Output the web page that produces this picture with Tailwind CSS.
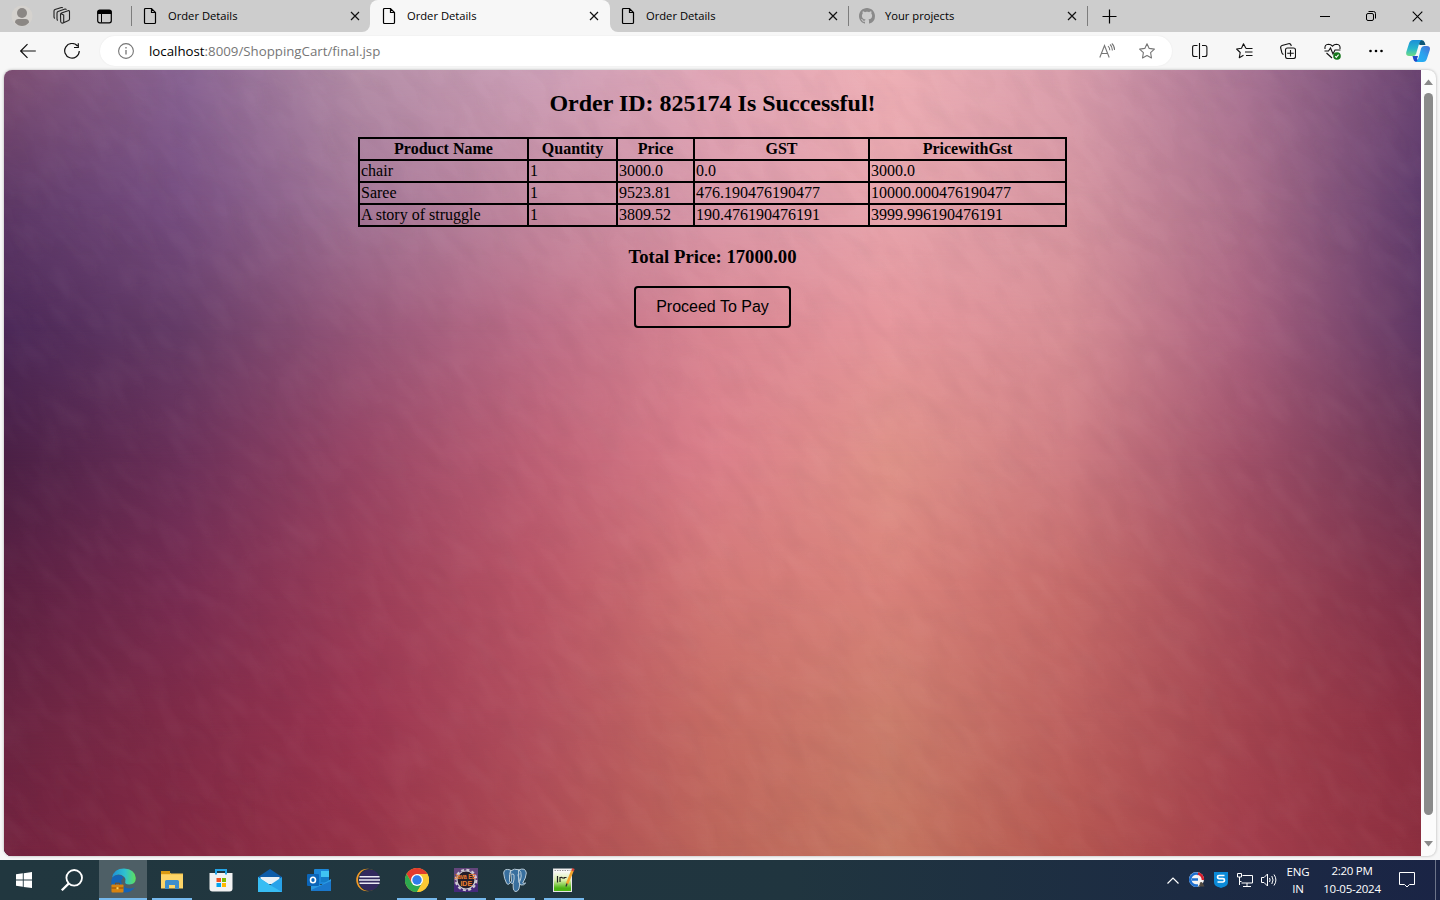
<!DOCTYPE html>
<html lang="en">
<head>
<meta charset="utf-8">
<title>Order Details</title>
<script src="https://cdn.jsdelivr.net/npm/@tailwindcss/browser@4"></script>
</head>
<body class="w-[1440px] h-[900px] overflow-hidden flex flex-col bg-[#f7f7f7] text-black font-['Open_Sans','Noto_Sans',sans-serif]">

<svg class="hidden">
  <defs>
    <symbol id="page" viewBox="0 0 14 18"><path d="M2.5 1.5h6l4 4v10a1 1 0 0 1-1 1h-9a1 1 0 0 1-1-1v-13a1 1 0 0 1 1-1zM8.500 1.500v4h4" fill="none" stroke="#000" stroke-width="1.2"/></symbol>
    <symbol id="x" viewBox="0 0 10 10"><path d="M1 1l8 8M9 1l-8 8" fill="none" stroke="#111" stroke-width="1.2"/></symbol>
  </defs>
</svg>

<!-- Tab strip -->
<header class="h-8 flex shrink-0 text-[11.2px]">
  <div class="w-[370px] h-8 bg-[#cdcdcd] rounded-br-lg flex items-center">
    <svg class="ml-[11px] w-[22px] h-[22px]" viewBox="0 0 22 22"><circle cx="11" cy="11" r="10.500" fill="#d5d2ce"/><circle cx="11" cy="8" r="5" fill="#8b8784"/><path d="M4 17.500q0-3.500 3.500-3.500h7q3.500 0 3.500 3.500-3 3.500-7 3.500t-7-3.500z" fill="#8b8784"/></svg>
    <svg class="ml-5 w-[18px] h-[18px]" viewBox="0 0 18 18" fill="none" stroke="#222" stroke-width="1.100" stroke-linejoin="round"><path d="M7.500 7.500q0-1 1-1.400l6.500-2.400q1.500-.4 1.500 1V12q0 1-1 1.500L10 16q-2 .5-2.300-1.500zM8 6.800l2.700 1.300v7.700M4.800 13.500q-.8-.5-.8-1.500V6q0-1 1-1.500L12 2q1-.2 1.400.8M1.800 11.500q-.8-.6-.8-1.500V4q0-1 1-1.500L8.500.500q.8-.1 1.200.6"/></svg>
    <svg class="ml-[26px] w-[15px] h-[15px]" viewBox="0 0 15 15"><rect x=".7" y="1.200" width="13.600" height="12.600" rx="2" fill="none" stroke="#000" stroke-width="1.200"/><path d="M.5 5V3q0-2 2-2h10q2 0 2 2v2z"/><path d="M4.500 5v8.500" stroke="#000"/></svg>
    <div class="ml-[19px] w-px h-5 bg-[#7d7d7d]"></div>
    <svg class="ml-[11px] w-3.5 h-[18px]"><use href="#page"/></svg>
    <span class="ml-[11px] w-[182px]">Order Details</span>
    <svg class="w-2.5 h-2.5"><use href="#x"/></svg>
  </div>
  <div class="w-60 bg-[#cdcdcd]">
    <div class="h-8 bg-[#f7f7f7] rounded-t-lg flex items-center">
      <svg class="ml-3 w-3.5 h-[18px]"><use href="#page"/></svg>
      <span class="ml-[11px] w-[182px]">Order Details</span>
      <svg class="w-2.5 h-2.5"><use href="#x"/></svg>
    </div>
  </div>
  <div class="flex-1 h-8 bg-[#cdcdcd] rounded-bl-lg flex items-center">
    <svg class="ml-[11px] w-3.5 h-[18px]"><use href="#page"/></svg>
    <span class="ml-[11px] w-[182px]">Order Details</span>
    <svg class="w-2.5 h-2.5"><use href="#x"/></svg>
    <div class="ml-2.5 w-px h-5 bg-[#7d7d7d]"></div>
    <svg class="ml-2.5 w-4 h-4" viewBox="0 0 16 16" fill="#8a8a8a"><path d="M8 0C3.580 0 0 3.580 0 8c0 3.540 2.290 6.530 5.470 7.590.4.070.55-.17.55-.38 0-.19-.01-.82-.01-1.490-2.010.37-2.530-.49-2.690-.94-.09-.23-.48-.94-.82-1.130-.28-.15-.68-.52-.01-.53.63-.01 1.080.58 1.230.82.720 1.210 1.870.87 2.330.66.070-.52.280-.87.510-1.070-1.780-.2-3.640-.89-3.640-3.950 0-.87.310-1.590.82-2.150-.08-.2-.36-1.020.08-2.120 0 0 .67-.21 2.200.82.640-.18 1.320-.27 2-.27s1.360.09 2 .27c1.530-1.040 2.200-.82 2.200-.82.440 1.100.160 1.920.080 2.120.510.560.820 1.270.820 2.150 0 3.070-1.870 3.750-3.650 3.950.290.250.540.730.540 1.480 0 1.070-.01 1.930-.01 2.200 0 .21.150.460.550.380A8.010 8.010 0 0 0 16 8c0-4.420-3.580-8-8-8z"/></svg>
    <span class="ml-2.5 w-[182px]">Your projects</span>
    <svg class="w-2.5 h-2.5"><use href="#x"/></svg>
    <div class="ml-2.5 w-px h-5 bg-[#7d7d7d]"></div>
    <svg class="ml-3.5 w-[15px] h-[15px]" viewBox="0 0 15 15"><path d="M7.500.500v14M.500 7.500h14" stroke="#000" stroke-width="1.200"/></svg>
    <div class="ml-auto flex h-8 items-center">
      <div class="w-[46px] flex justify-center"><div class="w-2.5 h-px bg-black"></div></div>
      <div class="w-[46px] flex justify-center"><svg class="w-3 h-3" viewBox="0 0 12 12" fill="none" stroke="#000"><rect x="1.500" y="3.500" width="7" height="7" rx="1.500"/><path d="M3.500 1.500h5q2 0 2 2v5"/></svg></div>
      <div class="w-[46px] flex justify-center"><svg class="w-[11px] h-[11px]" viewBox="0 0 11 11"><path d="M.7.7l9.600 9.600M10.300.700L.700 10.300" stroke="#000" stroke-width="1.100"/></svg></div>
    </div>
  </div>
</header>

<!-- Address bar -->
<nav class="h-[38px] shrink-0 flex items-center">
  <svg class="ml-5 w-4 h-4" viewBox="0 0 16 16" fill="none" stroke="#111" stroke-width="1.200"><path d="M15.800 8H.800M7.500 1.200L.700 8l6.800 6.800"/></svg>
  <svg class="ml-7 w-4 h-4" viewBox="0 0 16 16" fill="none" stroke="#111" stroke-width="1.200"><path d="M13.500 3A7.300 7.300 0 1 0 15.300 8M14.300.300v4.200H10"/></svg>
  <div class="ml-5 w-[1072px] h-[30px] rounded-full bg-white shadow-[0_0_2px_rgba(0,0,0,0.07)] flex items-center">
    <svg class="ml-[18px] w-4 h-4" viewBox="0 0 16 16" fill="none" stroke="#757575" stroke-width="1.100"><circle cx="8" cy="8" r="7.400"/><path d="M8 7v4.500M8 4v1.400" stroke-width="1.300"/></svg>
    <span class="ml-[15px] mt-px text-[13.280px] whitespace-nowrap text-[#767676]"><span class="text-black">localhost</span>:8009/ShoppingCart/final.jsp</span>
    <svg class="ml-auto w-4 h-4" viewBox="0 0 16 16" fill="none" stroke="#767676" stroke-width="1.100"><path d="M.800 14.500L5.500 2.500l4.700 12M2.400 10.500h6.200M9 3.200q1.800 1.500 1.800 4M11 1.500q2.600 2.200 2.300 6M12.800.500q3 2.500 2.700 6.500"/></svg>
    <svg class="ml-6 mr-[17px] w-4 h-4" viewBox="0 0 16 16" fill="none" stroke="#767676" stroke-width="1.100" stroke-linejoin="round"><path d="M8 .700l2.200 4.700 5.200.7-3.800 3.600.9 5.300L8 12.500 3.500 15l.9-5.300L.600 6.100l5.200-.7z"/></svg>
  </div>
  <svg class="ml-5 w-4 h-4" viewBox="0 0 16 16" fill="none" stroke="#111" stroke-width="1.100"><path d="M7.500 0v16M5.500 2.500H2.500Q.6 2.500.6 4.500v7q0 2 1.900 2h3M10 2.500h3q1.900 0 1.900 2v7q0 2-1.900 2h-3"/></svg>
  <svg class="ml-7 w-[17px] h-4" viewBox="0 0 17 16" fill="none" stroke="#111" stroke-width="1.100" stroke-linejoin="round"><path d="M10 5.500L7.500.700 5.500 5.300.600 6l3.600 3.500-.9 5.200 4.200-2.500M10 5.500h6.500M9 9h7.500M10 12.500h6.500"/></svg>
  <svg class="ml-[27px] w-4 h-4" viewBox="0 0 16 16" fill="none" stroke="#111" stroke-width="1.100"><rect x="5.500" y="5" width="10" height="10.500" rx="2"/><path d="M10.500 7v6.500M7.200 10.200h6.600M3.500 11.500Q2.300 11 1.900 9.800L.700 5Q.300 3.200 2 2.500L8.500.700Q10.500.300 11 2l.3 1"/></svg>
  <svg class="ml-7 w-[17px] h-[17px]" viewBox="0 0 17 17" fill="none" stroke="#111" stroke-width="1.100"><path d="M1 6Q.300 1.300 4.500 1.200q2.500 0 4 2 1.500-2 4-2Q16.700 1.300 16 6M.500 8h4l2-3 2.500 6 2-4h5.500M2.500 10l5.500 5"/><circle cx="13" cy="13" r="3.800" fill="#15771b" stroke="none"/><path d="M11.300 13.200l1 1.200 2.300-2.800" stroke="#fff"/></svg>
  <svg class="ml-[27px] w-4 h-4" viewBox="0 0 16 16"><circle cx="2.500" cy="8" r="1.300"/><circle cx="8" cy="8" r="1.300"/><circle cx="13.500" cy="8" r="1.300"/></svg>
  <svg class="ml-[22px] w-6 h-6" viewBox="0 0 24 24">
    <defs><linearGradient id="cpa" x1="0" y1="0" x2="0" y2="1"><stop offset="0" stop-color="#1c8fd8"/><stop offset=".55" stop-color="#28b7cb"/><stop offset="1" stop-color="#6fdb83"/></linearGradient><linearGradient id="cpb" x1="1" y1="0" x2="0" y2="1"><stop offset="0" stop-color="#4a6bd2"/><stop offset=".5" stop-color="#2aa3ee"/><stop offset="1" stop-color="#25b4f5"/></linearGradient></defs>
    <path d="M12 1h3.500q2.500 0 3.200 2.500L19.500 6h-6z" fill="#0e5678"/>
    <path d="M6.500 17l5.500 0-1 3 3 3H10Q8 23 7.300 20z" fill="#2149c8"/>
    <path d="M7 1h9q-2 .5-3 4l-2.800 9.500Q9.500 17 7 17H3Q-.5 17 .3 13L3 4.500Q4 1 7 1z" fill="url(#cpa)"/>
    <path d="M17 23H9.500q2-.5 3-4l2.500-9.500Q15.700 7 18 7h3q3.700 0 2.800 4L21 19.500Q20 23 17 23z" fill="url(#cpb)"/>
  </svg>
</nav>

<!-- Page viewport -->
<div class="h-[790px] shrink-0 pl-1 pr-1 pb-1">
<div class="h-[786px] flex rounded-lg overflow-hidden shadow-[0_0_3px_rgba(0,0,0,0.3)] bg-[#fcfcfc]">
  <main class="relative isolate w-[1417px] h-full flex flex-col items-center font-['Liberation_Serif',serif]">
    <svg id="backdrop" class="absolute inset-0 -z-10 w-[1417px] h-[786px]" viewBox="0 0 1417 786">
      <defs>
        <filter id="grain" x="0" y="0" width="100%" height="100%" color-interpolation-filters="sRGB"><feTurbulence type="fractalNoise" baseFrequency=".025 .06" numOctaves="2" seed="4"/><feColorMatrix values="0 0 0 0 1  0 0 0 0 .9  0 0 0 0 .9  1.500 0 0 0 -.6"/></filter>
        <filter id="shade" x="0" y="0" width="100%" height="100%" color-interpolation-filters="sRGB"><feTurbulence type="fractalNoise" baseFrequency=".025 .06" numOctaves="2" seed="9"/><feColorMatrix values="0 0 0 0 .3  0 0 0 0 .15  0 0 0 0 .2  1.500 0 0 0 -.6"/></filter>
      </defs>
      <g id="mesh"></g>
      <g transform="rotate(50 708 393)">
        <rect x="-200" y="-450" width="1820" height="1700" filter="url(#grain)" opacity=".05"/>
        <rect x="-200" y="-450" width="1820" height="1700" filter="url(#shade)" opacity=".06"/>
      </g>
    </svg>
    <h2 class="mt-5 h-[27px] leading-[27px] text-[24px] font-bold">Order ID: 825174 Is Successful!</h2>
    <table class="mt-5 w-[709px] table-fixed border-collapse border-2 border-black text-[16px] leading-[18px] [&_th]:border-2 [&_td]:border-2 [&_th]:border-black [&_td]:border-black [&_th]:p-px [&_td]:p-px [&_th]:font-bold [&_tr]:h-[22px]">
      <colgroup><col class="w-[169px]"><col class="w-[89px]"><col class="w-[77px]"><col class="w-[175px]"><col class="w-[197px]"></colgroup>
      <tbody>
      <tr><th>Product Name</th><th>Quantity</th><th>Price</th><th>GST</th><th>PricewithGst</th></tr>
      <tr><td>chair</td><td>1</td><td>3000.0</td><td>0.0</td><td>3000.0</td></tr>
      <tr><td>Saree</td><td>1</td><td>9523.81</td><td>476.190476190477</td><td>10000.000476190477</td></tr>
      <tr><td>A story of struggle</td><td>1</td><td>3809.52</td><td>190.476190476191</td><td>3999.996190476191</td></tr>
      </tbody>
    </table>
    <h3 class="mt-[19px] h-[21px] leading-[21px] text-[18.720px] font-bold">Total Price: 17000.00</h3>
    <button class="mt-[19px] w-[157px] h-[42px] border-2 border-black rounded-[4px] text-[16px] font-['Liberation_Sans',sans-serif]">Proceed To Pay</button>
  </main>
  <div class="w-[15px] h-full flex flex-col items-center">
    <svg class="mt-[9px] w-[9px] h-[6px]" viewBox="0 0 9 6"><path d="M0 6l4.500-5.500L9 6z" fill="#8a8a8a"/></svg>
    <div class="mt-2 w-[9px] h-[722px] rounded-full bg-[#8b8b8b]"></div>
    <svg class="mt-[26px] w-[9px] h-[6px]" viewBox="0 0 9 6"><path d="M0 0l4.500 5.500L9 0z" fill="#8a8a8a"/></svg>
  </div>
</div>
</div>

<!-- Taskbar -->
<footer class="h-10 shrink-0 flex text-white bg-linear-to-r from-[#21373f] via-[#20353f] via-55% to-[#1a2445]">
  <div class="w-12 h-10 flex items-center justify-center"><svg class="w-4 h-4" viewBox="0 0 16 16" fill="#fff"><path d="M0 2.300l6.800-1v6.300H0zM7.700 1.200L16 0v7.600H7.700zM0 8.500h6.800v6.300l-6.800-1zM7.700 8.500H16V16l-8.300-1.100z"/></svg></div>
  <div class="w-12 mr-[3px] h-10 flex items-center justify-center"><svg class="w-[22px] h-[22px]" viewBox="0 0 22 22" fill="none" stroke="#fff" stroke-width="1.800"><circle cx="13.200" cy="8.800" r="7.800"/><path d="M7.600 14.600L.800 21.300" stroke-width="2.200"/></svg></div>
  <div class="w-12 h-10 bg-[#4e5f66] border-b-2 border-[#76b9ed] flex items-center justify-center">
    <svg class="mt-0.5 w-[25px] h-[25px]" viewBox="0 0 25 25"><defs><linearGradient id="ed"><stop offset="0" stop-color="#1d90d8"/><stop offset=".55" stop-color="#2fc2cf"/><stop offset="1" stop-color="#5fe05a"/></linearGradient></defs><path d="M.5 17Q-.5 9 4 7.500q6-1.500 8.500 2-3.500 3-1.500 7 3 4.500 9 4 2.500-.2 4-1.500-3.500 5.500-10.500 5.500-9 0-13-7.500z" fill="#1464b8"/><path d="M1 9.500Q3 .600 13 .500q11 .500 11.800 9.500 0 6.500-6.500 6.500-5 0-4-3 1-2.500-1-4.500-6-5-12.300.5z" fill="url(#ed)"/><rect x=".5" y="16.500" width="12" height="8" rx=".8" fill="#d8830f"/><path d="M4.500 16.500v-1.300h4v1.300M.5 20h12" fill="none" stroke="#8a4b08"/><rect x="5.500" y="19.200" width="2" height="2" fill="#ffd75e"/></svg>
  </div>
  <div class="w-[49px] flex flex-col items-center"><div class="h-[38px] flex items-center"><svg class="mt-0.5 w-[22px] h-[20px]" viewBox="0 0 22 20"><path d="M0 2h8l2 1.500h12V18H0z" fill="#f9c953"/><path d="M0 1h9v3H0z" fill="#d99a12"/><path d="M0 5h22v13.500H0z" fill="#fdd568"/><path d="M4 19v-7.500q0-1.500 1.500-1.500h11q1.500 0 1.500 1.500V19h-4v-4H8v4z" fill="#3d8ecc"/></svg></div><div class="w-10 h-0.5 bg-[#76b9ed]"></div></div>
  <div class="w-[49px] h-10 flex items-center justify-center"><svg class="w-6 h-6" viewBox="0 0 24 24"><path d="M7 6V2h10v4" fill="none" stroke="#24a5e8" stroke-width="2"/><path d="M.5 5h23v15.500q0 3-3 3h-17q-3 0-3-3z" fill="#f2f2f2"/><path d="M7 5v1.500M17 5v1.500" stroke="#24a5e8" stroke-width="2"/><path d="M7.500 10H12v4H7.500z" fill="#f25022"/><path d="M13 10h4v4h-4z" fill="#7fba00"/><path d="M7.500 15H12v4H7.500z" fill="#00a4ef"/><path d="M13 15h4v4h-4z" fill="#ffb900"/></svg></div>
  <div class="w-[49px] h-10 flex items-center justify-center"><svg class="w-6 h-[23px]" viewBox="0 0 24 23"><path d="M0 8L12 0l12 8v5H0z" fill="#0c5ca9"/><path d="M2.500 8h19v7h-19z" fill="#e9f0f6"/><path d="M0 8l12 8 12-8v15H0z" fill="#28a2e9"/><path d="M0 8v15h24L12 16z" fill="#38bdf3"/></svg></div>
  <div class="w-[49px] h-10 flex items-center justify-center"><svg class="w-6 h-[22px]" viewBox="0 0 24 22"><path d="M7 1q0-1 1-1h13q1 0 1 1v14H7z" fill="#1c87d8"/><path d="M14 2h8v6h-8z" fill="#3fc4f2"/><path d="M14 8h8v5h-8z" fill="#137cc8"/><path d="M4 11l10 5 10-6v11q0 1-1 1H5q-1 0-1-1z" fill="#2a9ae3"/><path d="M4 21l20-9v9q0 1-1 1H5z" fill="#1a78cc"/><rect y="5" width="12" height="12" rx="1" fill="#0b65b8"/><ellipse cx="6" cy="11" rx="2.500" ry="2.800" fill="none" stroke="#fff" stroke-width="1.600"/></svg></div>
  <div class="w-[49px] h-10 flex items-center justify-center"><svg class="w-6 h-6" viewBox="0 0 24 24"><circle cx="11.500" cy="12" r="11.300" fill="#f39a26"/><circle cx="13" cy="12" r="11" fill="#20343e"/><circle cx="13.500" cy="12" r="10.500" fill="#33295e"/><path d="M3.500 8.700h20M3 12h21M3.500 15.200h20" stroke="#eceaf4" stroke-width="1.600"/></svg></div>
  <div class="w-[49px] flex flex-col items-center"><div class="h-[38px] flex items-center"><svg class="mt-0.5 w-6 h-6" viewBox="0 0 24 24"><circle cx="12" cy="12" r="12" fill="#fcc934"/><path d="M1.600 6A12 12 0 0 1 22.400 6H12L6.800 15z" fill="#e33b2e"/><path d="M1.600 6A12 12 0 0 0 12 24l5.200-9H6.800z" fill="#2da94f"/><path d="M12 6h10.400A12 12 0 0 1 12 24l5.200-9z" fill="#fcc934"/><circle cx="12" cy="12" r="6" fill="#fff"/><circle cx="12" cy="12" r="4.700" fill="#2f7de9"/></svg></div><div class="w-10 h-0.5 bg-[#76b9ed]"></div></div>
  <div class="w-[49px] flex flex-col items-center"><div class="h-[38px] flex items-center"><svg class="mt-0.5 w-6 h-6 overflow-visible" viewBox="0 0 24 24"><rect width="24" height="24" fill="#65467d"/><path d="M0 16h24v8H0z" fill="#45297a"/><circle cx="12" cy="12" r="9" fill="#241c2a" stroke="#cfcbd3" stroke-width="1.200"/><circle cx="12" cy="12" r="10.300" fill="none" stroke="#cfcbd3" stroke-width="2" stroke-dasharray="3 2.400"/><g font-family="Liberation Sans" font-weight="bold" fill="#f08030"><text transform="translate(.3 11) scale(.82 1)" font-size="7" letter-spacing="-.1">Java EE</text><text x="6.400" y="17.500" font-size="7">IDE</text></g></svg></div><div class="w-10 h-0.5 bg-[#76b9ed]"></div></div>
  <div class="w-[49px] flex flex-col items-center"><div class="h-[38px] flex items-center"><svg class="mt-0.5 w-6 h-6" viewBox="0 0 24 24" fill="#386f9e" stroke="#b9ccd8" stroke-width="1" stroke-linejoin="round"><path d="M7.500 2Q1 0 .7 5q.3 5.500 3 10.500 1.500 2 3.300-.5l1.500-2zM15.500 2Q22.500-1 23.300 5q-.3 5-3.600 10 1.500.8 3 0-1.500 2.500-5 2l-2-3zM7.500 3Q11 0 16 1.800q2.500 2 2.200 6.200-.2 3-1.700 6 .5 9-3.500 9.500-2.700 0-2.800-4.500v-3.500Q6 15.500 6.500 11q-.5-5 1-8z"/><path d="M8.500 6.500q2-1.500 2.500.5.500 4-.8 8M16.500 6q-1.500-.5-1.500 1l1.500 6" fill="none"/></svg></div><div class="w-10 h-0.5 bg-[#76b9ed]"></div></div>
  <div class="w-[49px] flex flex-col items-center"><div class="h-[38px] flex items-center"><svg class="mt-0.5 w-6 h-6" viewBox="0 0 24 24"><defs><linearGradient id="np" x1="0" y1="0" x2="0" y2="1"><stop offset=".1" stop-color="#fafafa"/><stop offset=".5" stop-color="#d8efa8"/><stop offset=".85" stop-color="#4db414"/></linearGradient></defs><rect x="1.500" y="1" width="18" height="22.500" fill="url(#np)" stroke="#e6e6e6"/><path d="M2.500 2.500h16" stroke="#999" stroke-width="1.200" stroke-dasharray="1.500 1"/><path d="M5.500 8v6.500M8 9v5M8.500 9.500q2-.5 2 1M12 9.500h2.500M12 9v2" fill="none" stroke="#222" stroke-width="1.200"/><path d="M20.500 2.500L15 16" stroke="#f3a42c" stroke-width="2.600"/><path d="M21.500 .500l-1 2.500" stroke="#d4473a" stroke-width="2.600"/><path d="M15 15.500l-1 3" stroke="#333" stroke-width="1.300"/></svg></div><div class="w-10 h-0.5 bg-[#76b9ed]"></div></div>
  <div class="ml-auto flex items-center h-10">
    <svg class="w-3 h-[7px]" viewBox="0 0 12 7"><path d="M.500 6.500L6 1l5.500 5.500" fill="none" stroke="#fff" stroke-width="1.200"/></svg>
    <svg class="ml-2.5 w-4 h-4" viewBox="0 0 16 16"><circle cx="7.500" cy="7.500" r="7.500" fill="#f4f4f4"/><path d="M9.500 2A6 6 0 1 0 9 13.300M3 7.500h6" fill="none" stroke="#1d6fd0" stroke-width="2.600"/><path d="M9 1.500Q13.500 2.500 14 8" fill="none" stroke="#d51d2c" stroke-width="2.500"/><path d="M9 14.500q2-1 2-4 2-1.500 3 1l1.500 3z" fill="#514a42"/></svg>
    <svg class="ml-[9px] w-3.5 h-4" viewBox="0 0 14 16"><path d="M0 0h14v10q0 3-3 4.500L7 16l-4-1.500Q0 13 0 10z" fill="#0b8ad8"/><path d="M10.500 3.500H5Q3.500 3.500 3.500 5T5 6.700h4q1.500 0 1.500 1.600T9 10H3.500" fill="none" stroke="#fff" stroke-width="1.700"/></svg>
    <svg class="ml-[9px] w-4 h-[14px]" viewBox="0 0 16 14" fill="none" stroke="#fff"><path d="M5.500 2.500h10v7.500H4.500M10 10v3M6 13.500h8M.5.500h4v3.500H.500zM2.500 4v8M2.500 8.500h2"/></svg>
    <svg class="ml-2 w-[17px] h-[14px]" viewBox="0 0 17 14" fill="none" stroke="#fff"><path d="M.5 4.500h2.500L6.500 1v12L3 9.500H.500zM8.500 5q1.200 2 0 4M10.800 3q2.500 4 0 8M13 1.500q3.800 5.500 0 11"/></svg>
    <div class="ml-2 w-6 text-center text-[11.500px] leading-[17px] tracking-[-0.2px]">ENG<br>IN</div>
    <div class="ml-3 w-[60px] text-center text-[11.500px] leading-[18px] tracking-[-0.250px] whitespace-nowrap">2:20 PM<br>10-05-2024</div>
    <svg class="ml-[17px] w-4 h-4" viewBox="0 0 16 16" fill="none" stroke="#fff"><path d="M.5.500h15v12H10.500L8 15l-2.500-2.500h-5z"/></svg>
    <div class="ml-5 mr-1 w-px h-10 bg-[#6c7489]"></div>
  </div>
</footer>

<script>
  // Colour mesh of the wallpaper: each row fades into the next one.
  const ys = [0, 130, 260, 390, 520, 650, 786];
  const rows = [
    ['#7d4f74','#8a6594','#b58fa8','#cda0b8','#e2a8b8','#eeb0b6','#dba0ae','#ab7696','#6b4573'],
    ['#5f3a68','#785083','#a47899','#c48ca2','#da9aab','#e8a6ae','#d898a3','#ac708c','#5f3c6d'],
    ['#4b2858','#653c67','#965679','#bc6d87','#da8793','#e5969c','#d88f96','#ab6380','#5f3764'],
    ['#4b2046','#6b3059','#984565','#bd6075','#db7f8a','#df9289','#cf7d83','#a05068','#6b3354'],
    ['#5c2042','#782c52','#9a3d58','#b95566','#d27876','#d9827b','#c66c6a','#a44a5a','#7c2e48'],
    ['#6a2442','#802b48','#9b3551','#b2505e','#c66c64','#cb7d6c','#be6260','#a3444f','#8a2e42'],
    ['#742440','#842943','#963347','#ad4a52','#bc655a','#c47560','#b55750','#a33e4c','#8e3040']
  ];
  let out = '';
  rows.forEach((r, i) => {
    const stops = r.map((c, k) => `<stop offset="${k / 8}" stop-color="${c}"/>`).join('');
    out += `<linearGradient id="row${i}">${stops}</linearGradient>`;
    const top = i ? ys[i - 1] : 0;
    if (i) {
      out += `<linearGradient id="fade${i}" gradientUnits="userSpaceOnUse" x1="0" y1="${top}" x2="0" y2="${ys[i]}"><stop offset="0" stop-color="#fff" stop-opacity="0"/><stop offset="1" stop-color="#fff"/></linearGradient>`;
      out += `<mask id="mask${i}" maskUnits="userSpaceOnUse" x="0" y="0" width="1417" height="786"><rect width="1417" height="786" fill="url(#fade${i})"/></mask>`;
    }
    out += `<rect y="${top}" width="1417" height="${786 - top}" fill="url(#row${i})"${i ? ` mask="url(#mask${i})"` : ''}/>`;
  });
  document.getElementById('mesh').innerHTML = out;
</script>
</body>
</html>
